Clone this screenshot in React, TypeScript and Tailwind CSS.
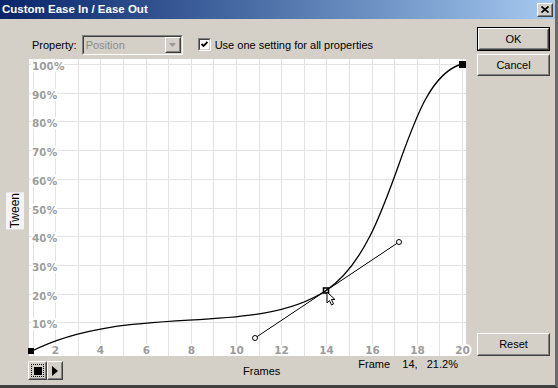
import React from "react";

// graph geometry (svg coords, origin = top-left of the white plot)
const W = 437;
const H = 297;
const fx = (f: number) => Math.round(3.5 + (f - 1) * 22.6) + 0.5;
const py = (p: number) => Math.round(292 - p * 2.87) + 0.5;

const frames = Array.from({ length: 20 }, (_, i) => i + 1);
const percents = [10, 20, 30, 40, 50, 60, 70, 80, 90, 100];

function Raised({ className = "", children }: { className?: string; children?: React.ReactNode }) {
  return (
    <div className={`border border-t-white border-l-white border-r-[#404040] border-b-[#404040] bg-[#d4d0c8] ${className}`}>
      <div className="w-full h-full border border-t-[#d4d0c8] border-l-[#d4d0c8] border-r-[#808080] border-b-[#808080] flex items-center justify-center">
        {children}
      </div>
    </div>
  );
}

function Sunken({ className = "", children }: { className?: string; children?: React.ReactNode }) {
  return (
    <div className={`border border-t-[#808080] border-l-[#808080] border-r-white border-b-white ${className}`}>
      <div className="w-full h-full border border-t-[#404040] border-l-[#404040] border-r-[#d4d0c8] border-b-[#d4d0c8] flex items-center">
        {children}
      </div>
    </div>
  );
}

function Graph() {
  return (
    <svg width={W} height={H} className="block overflow-visible" style={{ fontFamily: "'DejaVu Sans', sans-serif" }}>
      {/* grid */}
      {frames.map((f) => (
        <line key={"v" + f} x1={fx(f)} y1={0} x2={fx(f)} y2={H} stroke="#e2e2e2" strokeWidth={1} />
      ))}
      {percents.map((p) => (
        <line key={"h" + p} x1={0} y1={py(p)} x2={W} y2={py(p)} stroke="#e2e2e2" strokeWidth={1} />
      ))}

      {/* axis labels */}
      {percents.map((p) => (
        <text
          key={"l" + p}
          x={3}
          y={py(p) + 5}
          fontSize={10.5}
          fontWeight="bold"
          fill="#9c9c9c"
          stroke="white"
          strokeWidth={4}
          paintOrder="stroke"
        >
          {p}%
        </text>
      ))}
      {frames
        .filter((f) => f % 2 === 0)
        .map((f) => (
          <text
            key={"f" + f}
            x={fx(f)}
            y={295}
            fontSize={10.5}
            fontWeight="bold"
            fill="#9c9c9c"
            textAnchor="middle"
            stroke="white"
            strokeWidth={4}
            paintOrder="stroke"
          >
            {f}
          </text>
        ))}

      {/* handles */}
      <line x1={226} y1={279} x2={370} y2={183} stroke="black" strokeWidth={1} />
      <circle cx={226} cy={279} r={2.5} fill="white" stroke="black" strokeWidth={1} />
      <circle cx={370} cy={183} r={2.5} fill="white" stroke="black" strokeWidth={1} />

      {/* ease curve */}
      <path
        d="M3 292 C 100 243, 226 279, 297 231.5 C 370 183, 372 22, 433 5"
        fill="none"
        stroke="black"
        strokeWidth={1.3}
      />

      {/* points */}
      <rect x={-1} y={289} width={6} height={6} fill="black" />
      <rect x={430} y={2} width={7} height={7} fill="black" />
      <rect x={294.5} y={229} width={5} height={5} fill="none" stroke="black" strokeWidth={1.6} />

      {/* mouse cursor */}
      <path
        d="M298 233 L298 244 L300.5 241.5 L302.5 246 L304.5 245 L302.5 240.5 L306 240.5 Z"
        fill="white"
        stroke="black"
        strokeWidth={1}
        strokeLinejoin="miter"
      />
    </svg>
  );
}

export default function App() {
  return (
    <div
      className="w-[558px] h-[388px] bg-[#d4d0c8] flex flex-col border-r-[3px] border-r-[#6a6a6a] border-b-[3px] border-b-[#404040] text-[11px] leading-[13px] text-black overflow-hidden"
      style={{ fontFamily: "'Liberation Sans', Arial, sans-serif" }}
    >
      {/* Title bar */}
      <div className="h-[19px] shrink-0 flex items-center justify-between pl-[2px] pr-[2px] bg-gradient-to-r from-[#0a246a] to-[#a6caf0]">
        <span className="text-white font-bold text-[11.5px]">Custom Ease In / Ease Out</span>
        <Raised className="w-[16px] h-[14px]">
          <svg width="8" height="7" viewBox="0 0 8 7">
            <path d="M0.5 0.5 L7.5 6.5 M7.5 0.5 L0.5 6.5" stroke="black" strokeWidth={1.7} />
          </svg>
        </Raised>
      </div>

      {/* Body */}
      <div className="flex flex-1">
        {/* Left column: controls + graph */}
        <div className="w-[470px] flex flex-col">
          {/* property row */}
          <div className="h-[40px] pt-[16px] pl-[32px] flex items-start">
            <span className="mt-[4px]">Property:</span>
            <Sunken className="ml-[5px] w-[101px] h-[20px] bg-[#d4d0c8]">
              <span className="pl-[2px] text-[#8c8c8c] flex-1">Position</span>
              <Raised className="w-[16px] h-[16px]">
                <svg width="7" height="4" viewBox="0 0 7 4">
                  <path d="M0 0 L7 0 L3.5 4 Z" fill="#9a9a9a" />
                </svg>
              </Raised>
            </Sunken>
            <Sunken className="ml-[15px] mt-[3px] w-[13px] h-[13px] bg-white">
              <div className="w-full h-full bg-white flex items-center justify-center">
                <svg width="7" height="7" viewBox="0 0 7 7">
                  <path d="M0.5 3 L2.5 5 L6.5 1" fill="none" stroke="black" strokeWidth={1.8} />
                </svg>
              </div>
            </Sunken>
            <span className="ml-[4px] mt-[4px]">Use one setting for all properties</span>
          </div>

          {/* graph row */}
          <div className="flex">
            <div className="w-[29px] flex items-center justify-center">
              <span className="[writing-mode:vertical-rl] rotate-180 bg-[#f4f4f4] px-[1px] py-[3px] text-[12px] leading-[12px] mt-[6px]">
                Tween
              </span>
            </div>
            <div className="w-[437px] h-[297px] bg-white">
              <Graph />
            </div>
          </div>

          {/* bottom row */}
          <div className="flex items-start pl-[28px]">
            <div className="flex mt-[5px]">
              <Raised className="w-[19px] h-[19px]">
                <div className="w-[13px] h-[13px] border border-dotted border-black flex items-center justify-center">
                  <div className="w-[8px] h-[8px] bg-black" />
                </div>
              </Raised>
              <Raised className="w-[16px] h-[19px]">
                <svg width="6" height="10" viewBox="0 0 6 10">
                  <path d="M0 0 L6 5 L0 10 Z" fill="black" />
                </svg>
              </Raised>
            </div>
            <span className="ml-[180px] mt-[9px]">Frames</span>
            <span className="ml-[78px] mt-[2px] whitespace-pre">Frame    14,   21.2%</span>
          </div>
        </div>

        {/* Right column: buttons */}
        <div className="flex flex-col pl-[7px] pt-[8px] pb-[29px]">
          <div className="w-[73px] h-[24px] border border-black">
            <Raised className="w-full h-full">OK</Raised>
          </div>
          <Raised className="w-[73px] h-[22px] mt-[3px]">Cancel</Raised>
          <div className="flex-1" />
          <Raised className="w-[73px] h-[23px]">Reset</Raised>
        </div>
      </div>
    </div>
  );
}
